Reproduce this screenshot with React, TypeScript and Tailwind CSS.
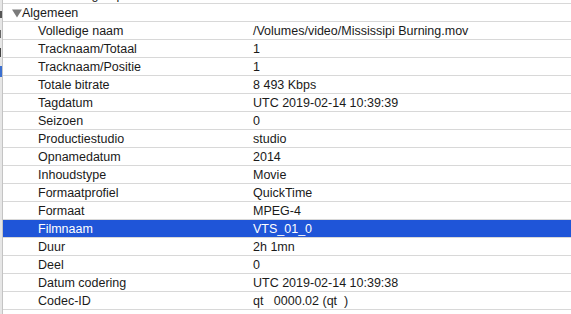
import React from "react";

type Row = { label: string; value: string; selected?: boolean };

const rows: Array<Row> = [
  { label: "Volledige naam", value: "/Volumes/video/Mississipi Burning.mov" },
  { label: "Tracknaam/Totaal", value: "1" },
  { label: "Tracknaam/Positie", value: "1" },
  { label: "Totale bitrate", value: "8 493 Kbps" },
  { label: "Tagdatum", value: "UTC 2019-02-14 10:39:39" },
  { label: "Seizoen", value: "0" },
  { label: "Productiestudio", value: "studio" },
  { label: "Opnamedatum", value: "2014" },
  { label: "Inhoudstype", value: "Movie" },
  { label: "Formaatprofiel", value: "QuickTime" },
  { label: "Formaat", value: "MPEG-4" },
  { label: "Filmnaam", value: "VTS_01_0", selected: true },
  { label: "Duur", value: "2h 1mn" },
  { label: "Deel", value: "0" },
  { label: "Datum codering", value: "UTC 2019-02-14 10:39:38" },
  { label: "Codec-ID", value: "qt   0000.02 (qt  )" },
];

const InfoRow: React.FC<Row> = ({ label, value, selected }) => {
  return (
    <div
      className={`flex h-[18px] items-center border-b pt-px border-[#d8d8d8] ${
        selected ? "bg-[#1f55d8] text-white" : "text-[#1a1a1a]"
      }`}
    >
      <span className="w-[250px] shrink-0 pl-[35px] whitespace-nowrap">{label}</span>
      <span className="whitespace-pre">{value}</span>
    </div>
  );
};

export default function App() {
  return (
    <div
      className="flex h-[314px] w-[571px] overflow-hidden bg-white text-[12.5px] leading-none"
      style={{ fontFamily: '"Liberation Sans", Arial, sans-serif' }}
    >
      {/* window behind, only its edge shows */}
      <div className="flex w-[2px] shrink-0 flex-col bg-[#e6e6e6]">
        <div className="mt-[11px] h-[7px] w-[2px] bg-[#555]" />
        <div className="mt-[12px] h-[8px] w-[1px] bg-[#666]" />
        <div className="mt-[10px] h-[9px] w-[1px] bg-[#444]" />
        <div className="mt-[9px] h-[11px] w-[2px] bg-[#3b6fd0]" />
      </div>
      <div className="w-px shrink-0 bg-[#c4c4c4]" />

      <div className="-mt-[14px] flex-1">
        <div className="flex h-[18px] items-center border-b pt-px border-[#d8d8d8] text-[#1a1a1a]">
          <span className="w-[250px] shrink-0 pl-[35px]">Alternate group</span>
          <span>1</span>
        </div>
        <div className="flex h-[18px] items-center border-b pt-px border-[#d8d8d8] text-[#1a1a1a]">
          <svg width="10" height="9" viewBox="0 0 10 9" className="ml-[9px]">
            <path d="M0 0.5 L10 0.5 L5 8.5 Z" fill="#7b7b7b" />
          </svg>
          <span>Algemeen</span>
        </div>
        {rows.map((row) => (
          <InfoRow key={row.label} {...row} />
        ))}
        <div className="h-[18px]" />
      </div>
    </div>
  );
}
